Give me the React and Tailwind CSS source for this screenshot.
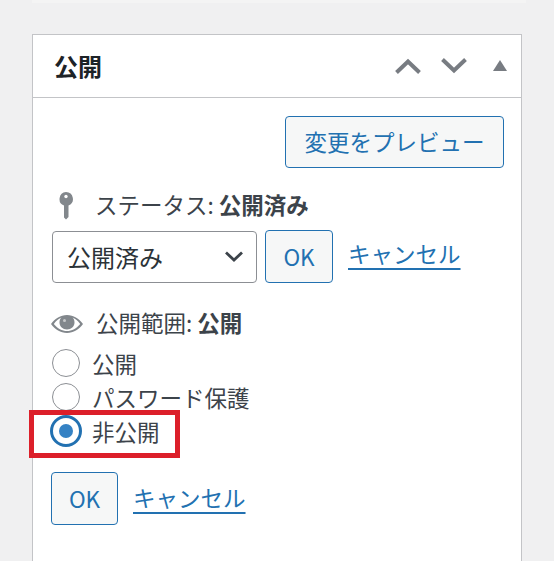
const font = { fontFamily: '"Noto Sans CJK JP", "Open Sans", sans-serif' };

const Radio = ({ label, checked }) => (
  <label className="flex items-center h-[34px]">
    {checked ? (
      <span className="flex items-center justify-center w-[32px] h-[32px] -ml-[2px] mr-[10px] rounded-full border-[3px] border-[#2271b1] bg-white">
        <span className="w-[14px] h-[14px] rounded-full bg-[#3582c4]" />
      </span>
    ) : (
      <span className="w-[28px] h-[28px] mr-[12px] rounded-full border border-[#8c8f94] bg-white" />
    )}
    <span className="text-[22.5px] leading-none text-[#3c434a]">{label}</span>
  </label>
);

const OkButton = ({ wide }) => (
  <button className={`${wide ? 'w-[68px]' : 'w-[67px]'} h-[53px] rounded-[4px] border border-[#2271b1] bg-[#f6f7f7] text-[22.5px] text-[#2271b1]`}>
    OK
  </button>
);

const CancelLink = () => (
  <a className="text-[22.5px] leading-none text-[#2271b1] underline underline-offset-[5px]">キャンセル</a>
);

export default function App() {
  return (
    <div className="relative w-[554px] h-[561px] overflow-hidden bg-[#f0f0f1]" style={font}>
      <div className="ml-[32px] w-[494px] h-[3px] bg-[#f4f4f4]" />

      {/* publish box */}
      <div className="ml-[32px] mt-[31px] w-[490px] h-[560px] bg-white border border-[#c3c4c7]">
        <div className="flex items-center h-[63px] pl-[21px] pr-[14px] border-b border-[#c3c4c7]">
          <h2 className="text-[24px] leading-none font-bold text-[#1d2327]">公開</h2>
          <div className="ml-auto flex items-center text-[#787c82]">
            <svg width="26" height="16" viewBox="0 0 26 16" fill="none" stroke="currentColor" strokeWidth="4">
              <path d="M1.500 14.500 L13 3.500 L24.500 14.500" />
            </svg>
            <svg width="26" height="16" viewBox="0 0 26 16" fill="none" stroke="currentColor" strokeWidth="4" className="ml-[20px]">
              <path d="M1.500 1.500 L13 12.500 L24.500 1.500" />
            </svg>
            <svg width="14" height="11" viewBox="0 0 14 11" fill="currentColor" className="ml-[26px] mb-[2px]">
              <path d="M7 0 L14 11 L0 11 Z" />
            </svg>
          </div>
        </div>

        <div className="pt-[18px] pl-[19px] pr-[17px]">
          <div className="flex justify-end">
            <button className="w-[219px] h-[52px] rounded-[4px] border border-[#2271b1] bg-[#f6f7f7] text-[22.5px] text-[#2271b1]">
              変更をプレビュー
            </button>
          </div>

          <div className="flex items-center h-[30px] mt-[22px] text-[22.5px] text-[#3c434a]">
            <svg width="14" height="28" viewBox="0 0 14 28" fill="#82878c" className="ml-[7px] mr-[22px] mt-[2px]">
              <path d="M7 0a7 7 0 0 1 2.500 13.500V25L7 27.500 5 25.500V13.500A7 7 0 0 1 7 0z" />
              <circle cx="7" cy="4.500" r="1.700" fill="#ffffff" />
            </svg>
            <span>ステータス: <b className="font-bold">公開済み</b></span>
          </div>

          <div className="flex items-center mt-[10px]">
            <div className="flex items-center w-[205px] h-[52px] pl-[14px] pr-[13px] rounded-[4px] border border-[#8c8f94] bg-white text-[24px] text-[#2c3338]">
              <span>公開済み</span>
              <svg width="18" height="11" viewBox="0 0 18 11" fill="none" stroke="#3c434a" strokeWidth="2.800" className="ml-auto">
                <path d="M1 1.500 L9 9 L17 1.500" />
              </svg>
            </div>
            <div className="ml-[8px]"><OkButton wide /></div>
            <div className="ml-[15px] mb-[4px]"><CancelLink /></div>
          </div>

          <div className="flex items-center h-[30px] mt-[25px] text-[22.5px] text-[#3c434a]">
            <svg width="32" height="20" viewBox="0 0 32 20" fill="#82878c" className="-ml-[1px] mr-[13px] mt-[2px]">
              <path fillRule="evenodd" d="M16 1C9.500 1 4 4.500 0 10c4 5.500 9.500 9 16 9s12-3.500 16-9C28 4.500 22.500 1 16 1zM2.800 10C5.500 6.500 8 4.500 10.500 3.600 9 5 8.500 6.500 8.500 8.500c0 4 3.300 7 7.500 7s7.500-3 7.500-7c0-2-.5-3.500-2-4.900C24 4.500 26.500 6.500 29.200 10 25.500 14.500 21 17 16 17S6.500 14.500 2.800 10z" />
              <circle cx="16" cy="8.500" r="5.500" />
              <circle cx="13.500" cy="6.500" r="1.500" fill="#c6c8ca" />
            </svg>
            <span>公開範囲: <b className="font-bold">公開</b></span>
          </div>

          <div className="mt-[8px]">
            <Radio label="公開" />
            <Radio label="パスワード保護" />
            <Radio label="非公開" checked />
          </div>

          <div className="flex items-center mt-[24px] -ml-[1px]">
            <OkButton />
            <div className="ml-[15px]"><CancelLink /></div>
          </div>
        </div>
      </div>

      {/* annotation over the private option */}
      <div className="absolute left-[29px] top-[410px] w-[151px] h-[48px] border-[5px] border-[#dc1f2a]" />
    </div>
  );
}
